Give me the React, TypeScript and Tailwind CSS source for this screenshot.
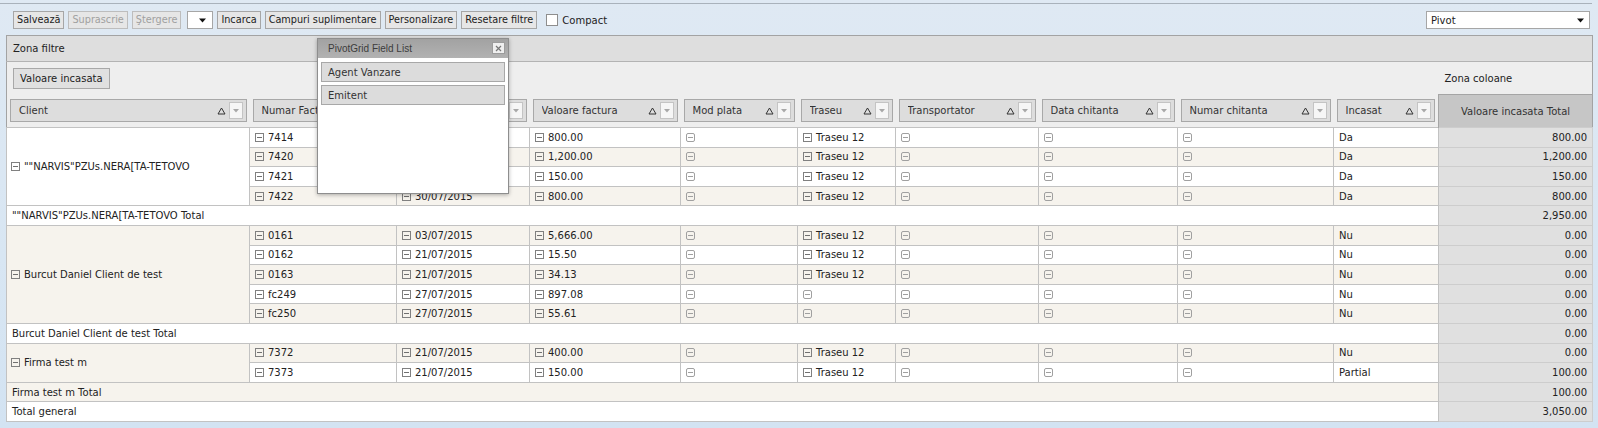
import React from 'react';

type Row = { nf: string; df: string; vf: string; tr: boolean; inc: string; tot: string };
type Group = { client: string; rows: Row[]; total: string };

const groups: Group[] = [
  {
    client: '""NARVIS"PZUs.NERA[TA-TETOVO',
    total: '2,950.00',
    rows: [
      { nf: '7414', df: '30/07/2015', vf: '800.00', tr: true, inc: 'Da', tot: '800.00' },
      { nf: '7420', df: '30/07/2015', vf: '1,200.00', tr: true, inc: 'Da', tot: '1,200.00' },
      { nf: '7421', df: '30/07/2015', vf: '150.00', tr: true, inc: 'Da', tot: '150.00' },
      { nf: '7422', df: '30/07/2015', vf: '800.00', tr: true, inc: 'Da', tot: '800.00' },
    ],
  },
  {
    client: 'Burcut Daniel Client de test',
    total: '0.00',
    rows: [
      { nf: '0161', df: '03/07/2015', vf: '5,666.00', tr: true, inc: 'Nu', tot: '0.00' },
      { nf: '0162', df: '21/07/2015', vf: '15.50', tr: true, inc: 'Nu', tot: '0.00' },
      { nf: '0163', df: '21/07/2015', vf: '34.13', tr: true, inc: 'Nu', tot: '0.00' },
      { nf: 'fc249', df: '27/07/2015', vf: '897.08', tr: false, inc: 'Nu', tot: '0.00' },
      { nf: 'fc250', df: '27/07/2015', vf: '55.61', tr: false, inc: 'Nu', tot: '0.00' },
    ],
  },
  {
    client: 'Firma test m',
    total: '100.00',
    rows: [
      { nf: '7372', df: '21/07/2015', vf: '400.00', tr: true, inc: 'Nu', tot: '0.00' },
      { nf: '7373', df: '21/07/2015', vf: '150.00', tr: true, inc: 'Partial', tot: '100.00' },
    ],
  },
];

const headers = [
  'Client',
  'Numar Factura',
  'Data factura',
  'Valoare factura',
  'Mod plata',
  'Traseu',
  'Transportator',
  'Data chitanta',
  'Numar chitanta',
  'Incasat',
];

function Minus({ soft }: { soft?: boolean }) {
  return (
    <span
      className={`inline-flex items-center justify-center w-[9px] h-[9px] shrink-0 border ${
        soft ? 'border-[#a0a0a0] rounded-[2px]' : 'border-[#808080]'
      }`}
    >
      <span className={`block w-[5px] h-px ${soft ? 'bg-[#a0a0a0]' : 'bg-[#707070]'}`} />
    </span>
  );
}

function Arrow() {
  return (
    <svg width="7" height="5" viewBox="0 0 7 5" className="shrink-0">
      <path d="M0 0.5 H7 L3.5 4.5 Z" fill="#111" />
    </svg>
  );
}

function HeaderBox({ label }: { label: string }) {
  return (
    <div className="mx-[3px] h-[23px] flex items-center bg-[#dddddd] border border-[#a8a8a8] pl-[8px] pr-[3px]">
      <span className="flex-1 truncate text-[#333]">{label}</span>
      <svg width="9" height="8" viewBox="0 0 9 8" className="shrink-0">
        <path d="M4.5 1 L8 7 L1 7 Z" fill="none" stroke="#333" strokeWidth="1" />
      </svg>
      <span className="ml-[3px] w-[14px] h-[17px] border border-[#c4c4c4] bg-[#f6f6f6] flex items-center justify-center shrink-0">
        <svg width="6" height="4" viewBox="0 0 6 4">
          <path d="M0 0 H6 L3 3.5 Z" fill="#a8a8a8" />
        </svg>
      </span>
    </div>
  );
}

function Btn({ label, disabled }: { label: string; disabled?: boolean }) {
  return (
    <div
      className={`h-[18px] px-[3px] flex items-center border bg-[#e6e6e6] whitespace-nowrap ${
        disabled ? 'border-[#bdbdbd] text-[#a0a0a0]' : 'border-[#a6a6a6] text-[#222]'
      }`}
    >
      {label}
    </div>
  );
}

function IconCell({ text, soft, bg }: { text?: string; soft?: boolean; bg: string }) {
  return (
    <td className={`${bg} border border-[#c2c2c2] pl-[5px] p-0`}>
      <div className="flex items-center gap-[4px] whitespace-nowrap overflow-hidden">
        <Minus soft={soft} />
        {text && <span>{text}</span>}
      </div>
    </td>
  );
}

export default function App() {
  let idx = 0;
  const body: React.ReactNode[] = [];
  groups.forEach((g, gi) => {
    const startIdx = idx;
    g.rows.forEach((r, i) => {
      const bg = idx % 2 ? 'bg-[#f6f3ed]' : 'bg-white';
      body.push(
        <tr key={`${gi}-${i}`} className="h-[19.6px]">
          {i === 0 && (
            <td
              rowSpan={g.rows.length}
              className={`${startIdx % 2 ? 'bg-[#f6f3ed]' : 'bg-white'} border border-[#c2c2c2] pl-[4px] p-0`}
            >
              <div className="flex items-center gap-[4px] whitespace-nowrap">
                <Minus />
                <span>{g.client}</span>
              </div>
            </td>
          )}
          <IconCell bg={bg} text={r.nf} />
          <IconCell bg={bg} text={r.df} />
          <IconCell bg={bg} text={r.vf} />
          <IconCell bg={bg} soft />
          <IconCell bg={bg} text={r.tr ? 'Traseu 12' : undefined} soft={!r.tr} />
          <IconCell bg={bg} soft />
          <IconCell bg={bg} soft />
          <IconCell bg={bg} soft />
          <td className={`${bg} border border-[#c2c2c2] pl-[5px] p-0 whitespace-nowrap`}>{r.inc}</td>
          <td className="bg-[#e0e0e0] border border-[#cdcdcd] border-l-[#b8b8b8] text-right pr-[5px] p-0">{r.tot}</td>
        </tr>
      );
      idx++;
    });
    const tbg = idx % 2 ? 'bg-[#f6f3ed]' : 'bg-white';
    body.push(
      <tr key={`t-${gi}`} className="h-[19.6px]">
        <td colSpan={10} className={`${tbg} border border-[#c2c2c2] pl-[5px] p-0 whitespace-nowrap`}>
          {g.client} Total
        </td>
        <td className="bg-[#e0e0e0] border border-[#cdcdcd] border-l-[#b8b8b8] text-right pr-[5px] p-0">{g.total}</td>
      </tr>
    );
    idx++;
  });
  body.push(
    <tr key="tg" className="h-[19.6px]">
      <td colSpan={10} className="bg-white border border-[#c2c2c2] pl-[5px] p-0 whitespace-nowrap">
        Total general
      </td>
      <td className="bg-[#e0e0e0] border border-[#cdcdcd] border-l-[#b8b8b8] text-right pr-[5px] p-0">3,050.00</td>
    </tr>
  );

  return (
    <div className="relative w-[1598px] h-[428px] overflow-hidden bg-[linear-gradient(180deg,#dfe9f3_0%,#d8e6f3_60%,#d3e3f2_100%)] font-['DejaVu_Sans',sans-serif] text-[10px] text-[#222]">
      <div className="h-[3px]" />
      <div className="h-px bg-[#a9b2bb] mr-[6px]" />
      {/* toolbar */}
      <div className="flex items-center h-[18px] mt-[7px] pl-[13px] pr-[8px] text-[9.7px]">
        <div className="flex items-center gap-[4px]">
          <Btn label="Salvează" />
          <Btn label="Suprascrie" disabled />
          <Btn label="Ştergere" disabled />
        </div>
        <div className="ml-[6px] w-[26px] h-[18px] border border-[#a6a6a6] bg-white flex items-center justify-end pr-[6px]">
          <Arrow />
        </div>
        <div className="ml-[4px] flex items-center gap-[4px]">
          <Btn label="Incarca" />
          <Btn label="Campuri suplimentare" />
          <Btn label="Personalizare" />
          <Btn label="Resetare filtre" />
        </div>
        <div className="ml-[9px] w-[12px] h-[12px] border border-[#8e8e8e] bg-white" />
        <span className="ml-[4px] text-[10px]">Compact</span>
        <div className="ml-auto w-[164px] h-[18px] border border-[#a6a6a6] bg-white flex items-center pl-[4px] pr-[5px] text-[10px]">
          <span className="flex-1">Pivot</span>
          <Arrow />
        </div>
      </div>

      {/* panel */}
      <div className="mt-[6px] ml-[6px] w-[1586px]">
        <table className="table-fixed border-collapse w-[1586px] border border-[#a3a3a3]">
          <colgroup>
            <col className="w-[243px]" />
            <col className="w-[147px]" />
            <col className="w-[133px]" />
            <col className="w-[151px]" />
            <col className="w-[117px]" />
            <col className="w-[98px]" />
            <col className="w-[143px]" />
            <col className="w-[139px]" />
            <col className="w-[156px]" />
            <col className="w-[105px]" />
            <col className="w-[154px]" />
          </colgroup>
          <tbody>
            <tr className="h-[26px]">
              <td colSpan={11} className="bg-[#dedede] border-b border-[#b3b3b3] pl-[6px] p-0">
                Zona filtre
              </td>
            </tr>
            <tr className="h-[33px] bg-[#eeeeee]">
              <td colSpan={10} className="pl-[6px] p-0">
                <div className="inline-flex items-center h-[21px] px-[6px] border border-[#a8a8a8] bg-[#e0e0e0]">
                  Valoare incasata
                </div>
              </td>
              <td className="pl-[6px] p-0">Zona coloane</td>
            </tr>
            <tr className="h-[33px] bg-[#eeeeee]">
              {headers.map((h) => (
                <td key={h} className="p-0">
                  <HeaderBox label={h} />
                </td>
              ))}
              <td className="bg-[#c6c6c6] border-l border-t border-[#a5a5a5] text-center text-[#333] p-0">
                Valoare incasata Total
              </td>
            </tr>
            {body}
          </tbody>
        </table>
      </div>

      {/* field list popup */}
      <div className="absolute left-[317px] top-[38px] w-[192px] h-[156px] border border-[#8e8e8e] bg-white shadow-[0_1px_4px_rgba(0,0,0,0.3)]">
        <div className="relative h-[19px] bg-[linear-gradient(180deg,#a2a2a2_0%,#b2b2b2_100%)] flex items-center pl-[10px] font-['Liberation_Sans',sans-serif] text-[10px] text-[#3c3c3c]">
          PivotGrid Field List
          <div className="absolute right-[3px] top-[3px] w-[13px] h-[12px] border border-[#9c9c9c] bg-[#efefef] flex items-center justify-center">
            <svg width="7" height="7" viewBox="0 0 7 7">
              <path d="M1 1 L6 6 M6 1 L1 6" stroke="#777" strokeWidth="1.2" />
            </svg>
          </div>
        </div>
        <div className="mx-[3px] mt-[4px] h-[20px] bg-[#dcdcdc] border border-[#a8a8a8] flex items-center pl-[6px] text-[#333]">
          Agent Vanzare
        </div>
        <div className="mx-[3px] mt-[3px] h-[20px] bg-[#dcdcdc] border border-[#a8a8a8] flex items-center pl-[6px] text-[#333]">
          Emitent
        </div>
      </div>
    </div>
  );
}
